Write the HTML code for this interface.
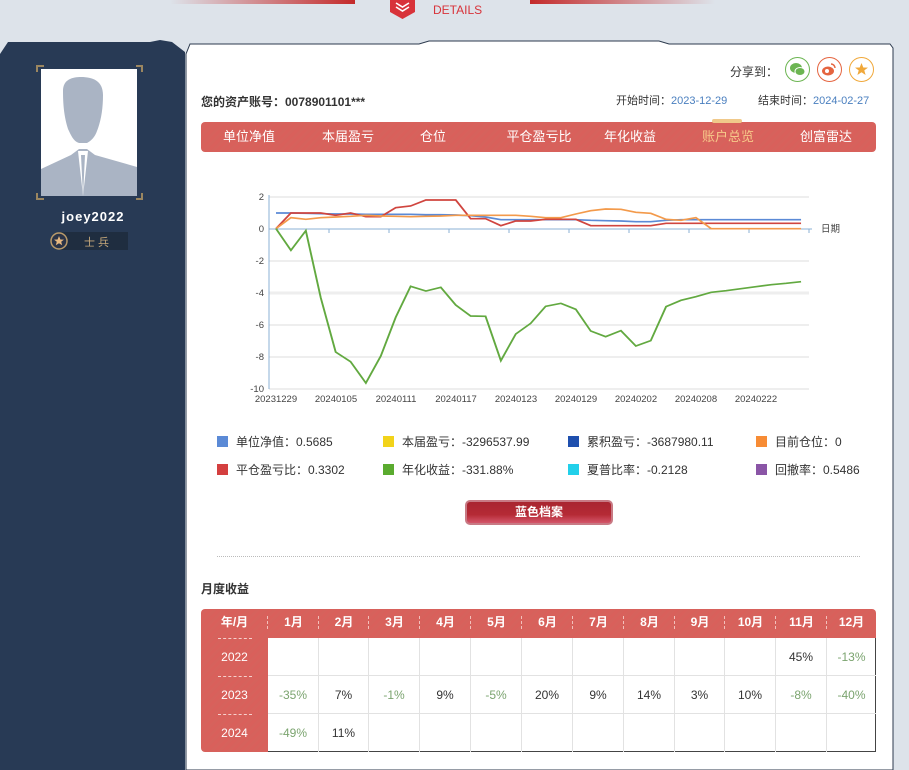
<!DOCTYPE html>
<html><head><meta charset="utf-8"><style>
*{margin:0;padding:0;box-sizing:border-box}
body{width:909px;height:770px;background:#dde3ea;position:relative;overflow:hidden;font-family:"Liberation Sans","Noto Sans CJK SC",sans-serif;font-size:12px;color:#333}
.a{position:absolute}
.tab{position:absolute;top:122px;height:30px;line-height:30px;color:#fff;font-size:13px;transform:translateX(-50%);white-space:nowrap}
.lg{position:absolute;font-size:12px;color:#333;white-space:nowrap}
.lg i{display:inline-block;width:11px;height:11px;vertical-align:-1px;margin-right:8px}
.th{position:absolute;top:609px;height:27px;line-height:27px;color:#fff;font-size:12px;text-align:center;font-weight:bold}
.th:before{content:"";position:absolute;left:-1px;top:7px;height:13px;border-left:1px dashed #f3c0bb}
.th.f:before{display:none}
.td{position:absolute;height:38px;line-height:38px;text-align:center;font-size:12px;color:#333;border-right:1px solid #e2e2e2;border-bottom:1px solid #e2e2e2}
.g{color:#7ba46f}
.yr{position:absolute;left:201px;width:67px;height:38px;line-height:38px;text-align:center;color:#fff}
.yr:before{content:"";position:absolute;left:17px;top:0;width:34px;border-top:1px dashed #f6d0cc}
</style></head><body>
<div class="a" style="left:170px;top:0;width:185px;height:4px;background:linear-gradient(90deg,rgba(200,40,40,0),#c42a2a)"></div>
<div class="a" style="left:530px;top:0;width:185px;height:4px;background:linear-gradient(90deg,#c42a2a,rgba(200,40,40,0))"></div>
<svg class="a" style="left:388px;top:0" width="30" height="20"><path d="M2 0H27V12L14.5 19L2 12Z" fill="#d8333a"/><path d="M8 3L14.5 7L21 3M8 7L14.5 11L21 7" stroke="#fff" stroke-width="1.6" fill="none"/></svg>
<div class="a" style="left:433px;top:3px;color:#d8333a;font-size:12px">DETAILS</div>
<svg class="a" style="left:0;top:40px" width="200" height="730"><path d="M8 2H150L160 0L172 2L185 12V730H0V14Z" fill="#283a55"/></svg>
<svg class="a" style="left:184px;top:40px" width="712" height="730"><path d="M6 4H235L245 1H475L485 4H706L709 8V730H2V14Z" fill="#fff" stroke="#2c3a4e" stroke-width="1"/></svg>
<div class="a" style="left:41px;top:69px;width:96px;height:127px;background:#fff"></div>
<svg class="a" style="left:41px;top:69px" width="96" height="127"><path d="M22 22C22 10 32 8 40 8C52 8 62 12 62 26C62 40 60 52 56 62C54 68 50 72 46 74H38C32 72 30 66 27 60C24 50 22 40 22 22Z" fill="#aab4c4"/><path d="M0 100L30 86L38 80H46L54 86L96 98V127H0Z" fill="#aab4c4"/><path d="M37 82L42 127L47 82Z" fill="#fff"/><path d="M40 86L42 127L44 86Z" fill="#aab4c4"/></svg>
<svg class="a" style="left:35px;top:63px" width="110" height="140" fill="none" stroke="#9b8660" stroke-width="2"><path d="M2 9V3H9M101 3H107V9M2 130V136H9M101 136H107V130"/></svg>
<div class="a" style="left:0;top:209px;width:186px;text-align:center;color:#fff;font-size:13px;font-weight:bold;letter-spacing:1px">joey2022</div>
<div class="a" style="left:60px;top:232px;width:68px;height:18px;background:#1f2d40"></div>
<svg class="a" style="left:49px;top:231px" width="20" height="20"><circle cx="10" cy="10" r="8" fill="#2a3347" stroke="#b99a6a" stroke-width="1.5"/><path d="M10 5L11.4 8.5L15 8.6L12.2 10.8L13.2 14.3L10 12.3L6.8 14.3L7.8 10.8L5 8.6L8.6 8.5Z" fill="#e7b880"/></svg>
<div class="a" style="left:84px;top:234px;color:#c5a77a;font-size:11px;letter-spacing:3px">士兵</div>
<div class="a" style="left:730px;top:63px;font-size:12px">分享到：</div>
<div class="a" style="left:785px;top:57px;width:25px;height:25px;border-radius:50%;border:1px solid #6cb552"></div>
<svg class="a" style="left:785px;top:57px" width="25" height="25"><ellipse cx="11" cy="11" rx="6" ry="5" fill="#6cb552"/><ellipse cx="15" cy="14.5" rx="5" ry="4" fill="#6cb552" stroke="#fff" stroke-width="1"/></svg>
<div class="a" style="left:817px;top:57px;width:25px;height:25px;border-radius:50%;border:1px solid #e5643f"></div>
<svg class="a" style="left:817px;top:57px" width="25" height="25"><ellipse cx="11" cy="14" rx="6" ry="4.5" fill="#e5643f"/><circle cx="10" cy="14" r="2" fill="#fff"/><path d="M14 7A4 4 0 0 1 18 11" stroke="#e5643f" stroke-width="1.5" fill="none"/></svg>
<div class="a" style="left:849px;top:57px;width:25px;height:25px;border-radius:50%;border:1px solid #f0a83a"></div>
<svg class="a" style="left:849px;top:57px" width="25" height="25"><path d="M12.5 6L14.3 10.5L19 10.6L15.3 13.4L16.6 18L12.5 15.3L8.4 18L9.7 13.4L6 10.6L10.7 10.5Z" fill="#f0a83a"/></svg>
<div class="a" style="left:201px;top:93px;font-size:12px;font-weight:bold;color:#333">您的资产账号：0078901101***</div>
<div class="a" style="left:616px;top:92px;font-size:11px;color:#333">开始时间：<span style="color:#4a7fbf">2023-12-29</span></div>
<div class="a" style="left:758px;top:92px;font-size:11px;color:#333">结束时间：<span style="color:#4a7fbf">2024-02-27</span></div>
<div class="a" style="left:201px;top:122px;width:675px;height:30px;background:repeating-linear-gradient(135deg,#d9605b 0 3px,#d6625c 3px 6px);border-radius:4px"></div>
<div class="a" style="left:712px;top:119px;width:30px;height:4px;background:#f0c98a;border-radius:2px"></div>
<div class="tab" style="left:249px">单位净值</div><div class="tab" style="left:348px">本届盈亏</div><div class="tab" style="left:433px">仓位</div><div class="tab" style="left:539px">平仓盈亏比</div><div class="tab" style="left:630px">年化收益</div><div class="tab" style="left:728px;color:#f7c98a">账户总览</div><div class="tab" style="left:826px">创富雷达</div>
<svg class="a" style="left:0;top:0" width="909" height="420" font-family="Liberation Sans" font-size="9.5" fill="#444">
<g stroke="#ddd"><line x1="269" y1="197" x2="809" y2="197"/><line x1="269" y1="261" x2="809" y2="261"/><line x1="269" y1="293" x2="809" y2="293" stroke="#eee" stroke-width="3"/><line x1="269" y1="325" x2="809" y2="325"/><line x1="269" y1="357" x2="809" y2="357"/><line x1="269" y1="389" x2="809" y2="389"/></g>
<line x1="269" y1="229" x2="812" y2="229" stroke="#8bb0d6"/><line x1="269" y1="195" x2="269" y2="389" stroke="#8bb0d6"/>
<g stroke="#8bb0d6"><line x1="329" y1="229" x2="329" y2="233"/><line x1="389" y1="229" x2="389" y2="233"/><line x1="449" y1="229" x2="449" y2="233"/><line x1="509" y1="229" x2="509" y2="233"/><line x1="569" y1="229" x2="569" y2="233"/><line x1="629" y1="229" x2="629" y2="233"/><line x1="689" y1="229" x2="689" y2="233"/><line x1="749" y1="229" x2="749" y2="233"/><line x1="809" y1="229" x2="809" y2="233"/></g>
<g text-anchor="end"><text x="264" y="200">2</text><text x="264" y="232">0</text><text x="264" y="264">-2</text><text x="264" y="296">-4</text><text x="264" y="328">-6</text><text x="264" y="360">-8</text><text x="264" y="392">-10</text></g>
<text x="821" y="232">日期</text>
<g text-anchor="middle"><text x="276" y="402">20231229</text><text x="336" y="402">20240105</text><text x="396" y="402">20240111</text><text x="456" y="402">20240117</text><text x="516" y="402">20240123</text><text x="576" y="402">20240129</text><text x="636" y="402">20240202</text><text x="696" y="402">20240208</text><text x="756" y="402">20240222</text></g>
</svg>
<svg class="a" style="left:250px;top:185px" width="600" height="220" viewBox="0 0 1569 660" preserveAspectRatio="none" fill="none" stroke-width="5">
<polyline stroke="#5b8ad6" points="68,84 107,84 146,85 185,86 224,87 263,87 303,88 342,88 381,88 420,88 460,89 499,89 538,90 577,92 616,96 656,104 695,104 734,104 773,104 813,104 852,104 891,106 930,107 970,108 1009,110 1048,110 1088,106 1127,104 1166,104 1206,104 1245,104 1284,104 1323,104 1363,104 1402,104 1441,104"/>
<polyline stroke="#d0453f" points="68,131 107,84 146,84 185,84 224,91 263,84 303,95 342,95 381,68 420,63 460,45 499,45 538,45 577,101 616,101 656,122 695,108 734,108 773,103 813,103 852,103 891,122 930,122 970,122 1009,122 1048,122 1088,115 1127,115 1166,115 1206,115 1245,115 1284,115 1323,115 1363,115 1402,115 1441,115"/>
<polyline stroke="#f39a4b" points="68,131 107,98 146,103 185,98 224,96 263,94 303,91 342,93 381,94 420,95 460,94 499,93 538,91 577,91 616,91 656,91 695,91 734,94 773,98 813,98 852,87 891,77 930,72 970,73 1009,82 1048,85 1088,103 1127,106 1166,98 1206,131 1245,131 1284,131 1323,131 1363,131 1402,131 1441,131"/>
<polyline stroke="#62a940" points="68,131 107,196 146,137 185,338 224,501 263,530 303,594 342,513 381,397 420,304 460,318 499,307 538,360 577,393 616,394 656,527 695,447 734,415 773,364 813,355 852,373 891,438 930,455 970,437 1009,483 1048,467 1088,365 1127,346 1166,335 1206,322 1245,317 1284,311 1323,305 1363,299 1402,295 1441,290"/>
</svg>
<div class="lg" style="left:217px;top:433px"><i style="background:#5b8ad6"></i>单位净值：0.5685</div>
<div class="lg" style="left:383px;top:433px"><i style="background:#f2d31a"></i>本届盈亏：-3296537.99</div>
<div class="lg" style="left:568px;top:433px"><i style="background:#1e4fae"></i>累积盈亏：-3687980.11</div>
<div class="lg" style="left:756px;top:433px"><i style="background:#f78c35"></i>目前仓位：0</div>
<div class="lg" style="left:217px;top:461px"><i style="background:#d43f3f"></i>平仓盈亏比：0.3302</div>
<div class="lg" style="left:383px;top:461px"><i style="background:#5aab2f"></i>年化收益：-331.88%</div>
<div class="lg" style="left:568px;top:461px"><i style="background:#22d0ea"></i>夏普比率：-0.2128</div>
<div class="lg" style="left:756px;top:461px"><i style="background:#8a55a6"></i>回撤率：0.5486</div>
<div class="a" style="left:465px;top:500px;width:148px;height:25px;border-radius:5px;background:linear-gradient(#a82530,#b52a35 60%,#d4566a);border:2px solid #c87a84;color:#fff;font-weight:bold;font-size:12px;text-align:center;line-height:21px">蓝色档案</div>
<div class="a" style="left:217px;top:556px;width:643px;border-top:1px dotted #bbb"></div>
<div class="a" style="left:201px;top:580px;font-size:12px;font-weight:bold;color:#333">月度收益</div>
<div class="a" style="left:201px;top:609px;width:675px;height:29px;background:repeating-linear-gradient(135deg,#d9605b 0 3px,#d6625c 3px 6px);border-radius:4px 4px 0 0"></div>
<div class="a" style="left:201px;top:636px;width:67px;height:116px;background:repeating-linear-gradient(135deg,#d9605b 0 3px,#d6625c 3px 6px);border-radius:0 0 0 4px"></div>
<div class="a" style="left:268px;top:638px;width:608px;height:114px;border:1px solid #444;border-top:none;border-left:none;background:#fff"></div>
<div class="th f" style="left:201px;width:67px">年/月</div>
<div class="th" style="left:268px;width:51px">1月</div><div class="th" style="left:319px;width:50px">2月</div><div class="th" style="left:369px;width:51px">3月</div><div class="th" style="left:420px;width:51px">4月</div><div class="th" style="left:471px;width:51px">5月</div><div class="th" style="left:522px;width:51px">6月</div><div class="th" style="left:573px;width:51px">7月</div><div class="th" style="left:624px;width:51px">8月</div><div class="th" style="left:675px;width:50px">9月</div><div class="th" style="left:725px;width:51px">10月</div><div class="th" style="left:776px;width:51px">11月</div><div class="th" style="left:827px;width:49px">12月</div>
<div class="yr" style="top:638px">2022</div>
<div class="yr" style="top:676px">2023</div>
<div class="yr" style="top:714px">2024</div>
<div class="td" style="left:268px;top:638px;width:51px"></div><div class="td" style="left:319px;top:638px;width:50px"></div><div class="td" style="left:369px;top:638px;width:51px"></div><div class="td" style="left:420px;top:638px;width:51px"></div><div class="td" style="left:471px;top:638px;width:51px"></div><div class="td" style="left:522px;top:638px;width:51px"></div><div class="td" style="left:573px;top:638px;width:51px"></div><div class="td" style="left:624px;top:638px;width:51px"></div><div class="td" style="left:675px;top:638px;width:50px"></div><div class="td" style="left:725px;top:638px;width:51px"></div><div class="td" style="left:776px;top:638px;width:51px">45%</div><div class="td g" style="left:827px;top:638px;width:49px;border-right:none">-13%</div>
<div class="td g" style="left:268px;top:676px;width:51px">-35%</div><div class="td" style="left:319px;top:676px;width:50px">7%</div><div class="td g" style="left:369px;top:676px;width:51px">-1%</div><div class="td" style="left:420px;top:676px;width:51px">9%</div><div class="td g" style="left:471px;top:676px;width:51px">-5%</div><div class="td" style="left:522px;top:676px;width:51px">20%</div><div class="td" style="left:573px;top:676px;width:51px">9%</div><div class="td" style="left:624px;top:676px;width:51px">14%</div><div class="td" style="left:675px;top:676px;width:50px">3%</div><div class="td" style="left:725px;top:676px;width:51px">10%</div><div class="td g" style="left:776px;top:676px;width:51px">-8%</div><div class="td g" style="left:827px;top:676px;width:49px;border-right:none">-40%</div>
<div class="td g" style="left:268px;top:714px;width:51px;border-bottom:none">-49%</div><div class="td" style="left:319px;top:714px;width:50px;border-bottom:none">11%</div><div class="td" style="left:369px;top:714px;width:51px;border-bottom:none"></div><div class="td" style="left:420px;top:714px;width:51px;border-bottom:none"></div><div class="td" style="left:471px;top:714px;width:51px;border-bottom:none"></div><div class="td" style="left:522px;top:714px;width:51px;border-bottom:none"></div><div class="td" style="left:573px;top:714px;width:51px;border-bottom:none"></div><div class="td" style="left:624px;top:714px;width:51px;border-bottom:none"></div><div class="td" style="left:675px;top:714px;width:50px;border-bottom:none"></div><div class="td" style="left:725px;top:714px;width:51px;border-bottom:none"></div><div class="td" style="left:776px;top:714px;width:51px;border-bottom:none"></div>
</body></html>
